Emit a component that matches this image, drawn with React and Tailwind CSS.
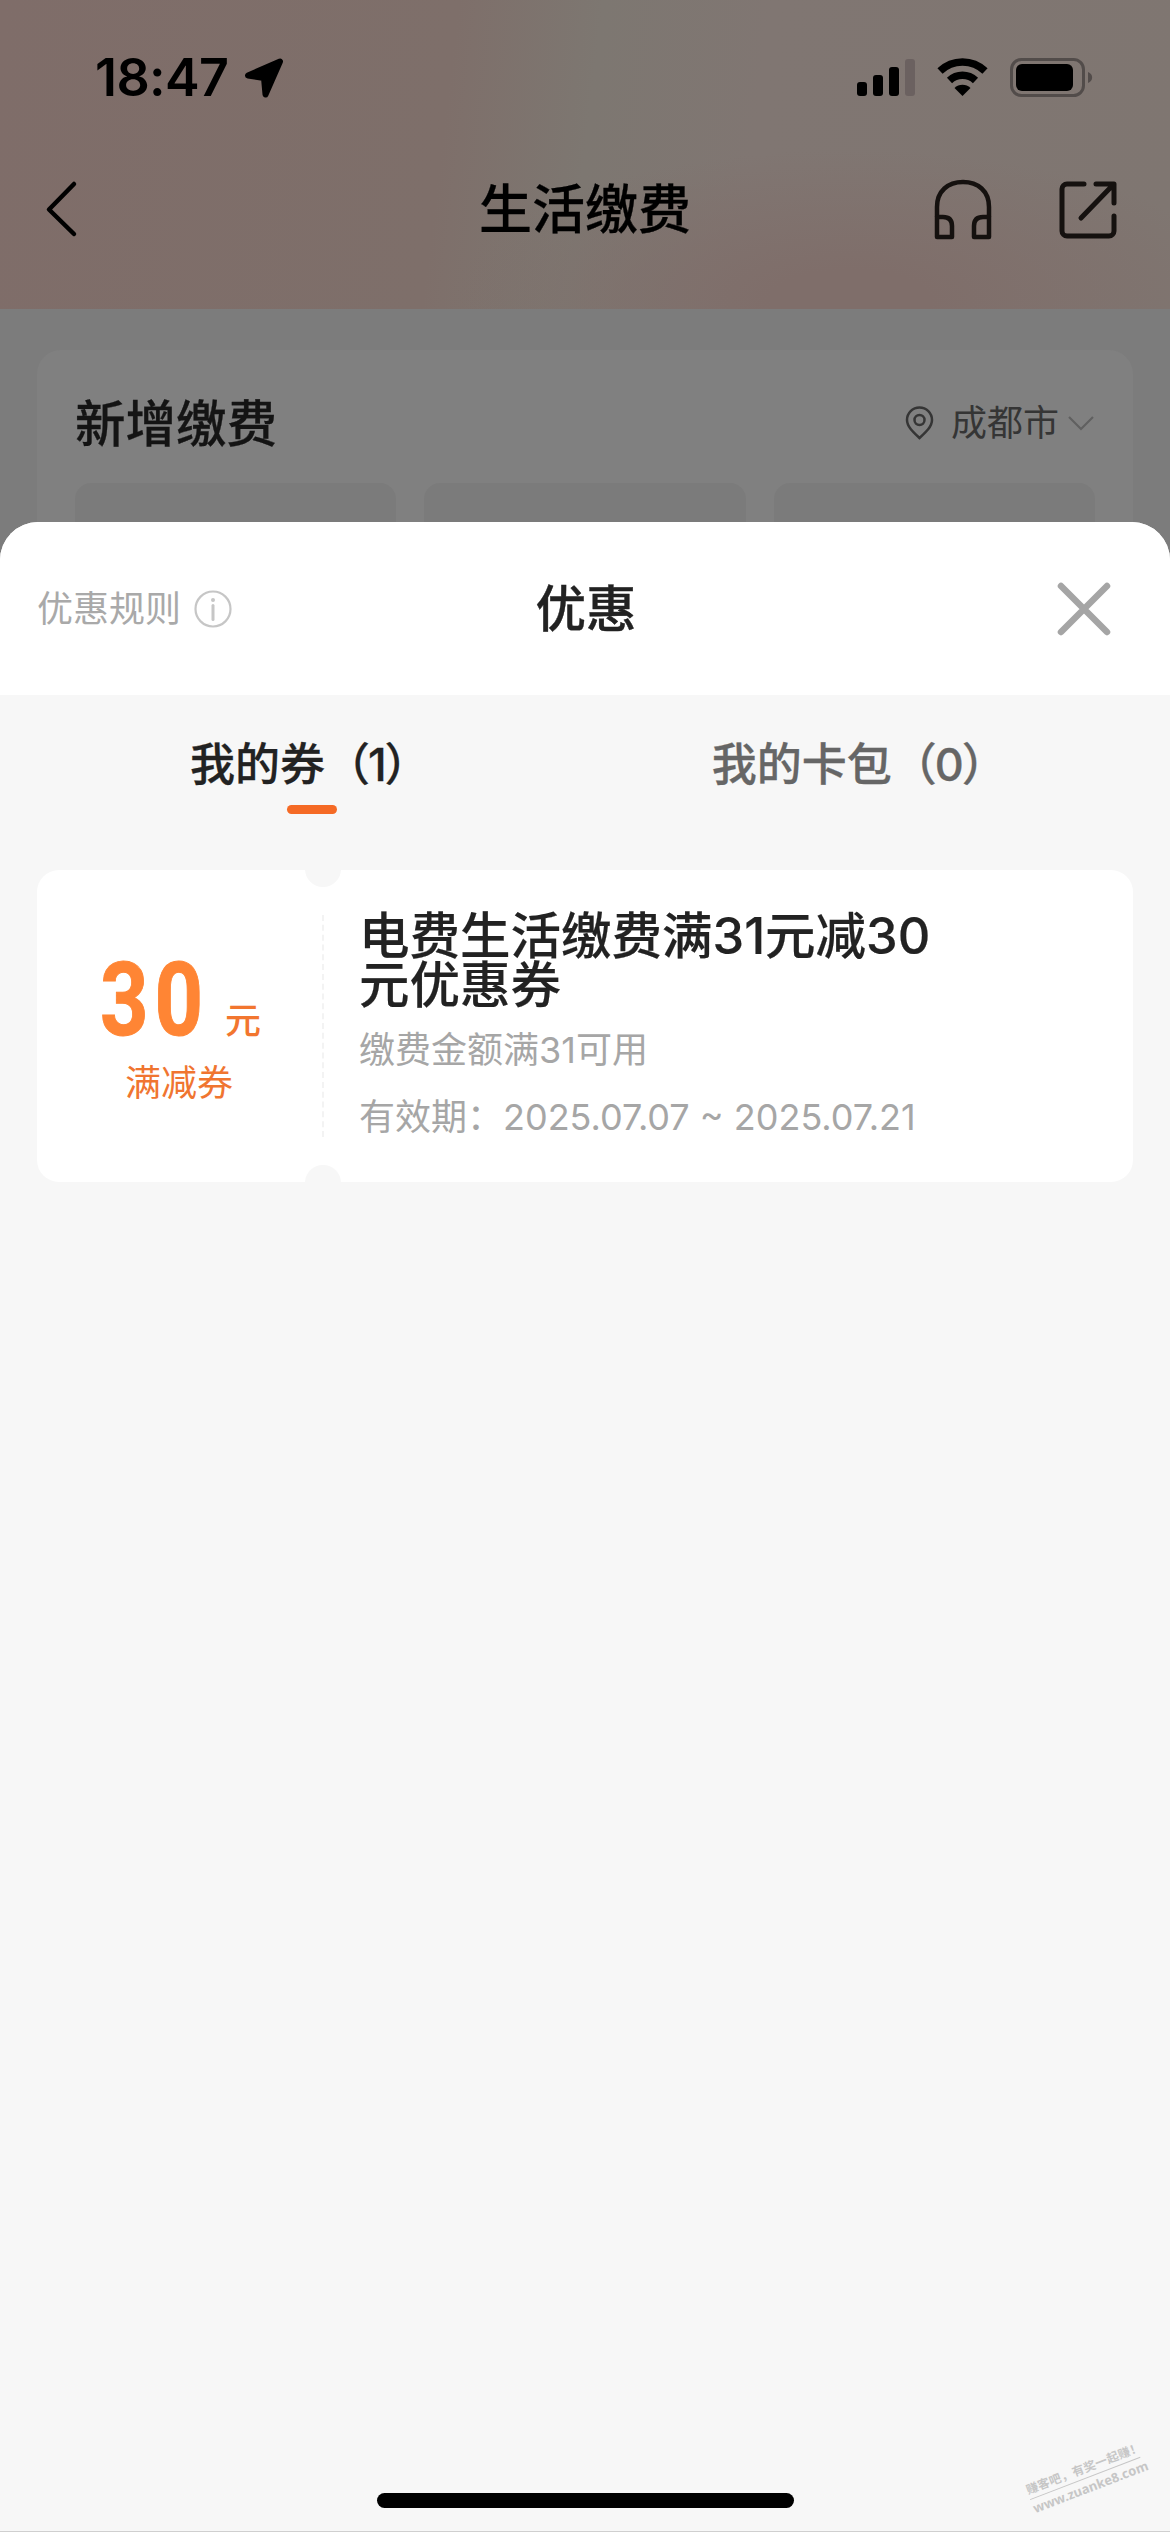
import React from "react";
import clsx from "clsx";

const TABS = [
  { key: "coupon", label: "我的券", count: 1, active: true },
  { key: "card", label: "我的卡包", count: 0, active: false },
];

const COUPONS = [
  {
    id: 1,
    amount: "30",
    unit: "元",
    type: "满减券",
    title: ["电费生活缴费满31元减30", "元优惠券"],
    condition: "缴费金额满31可用",
    validity: "有效期：2025.07.07 ~ 2025.07.21",
  },
];

function StatusBar() {
  return (
    <div className="flex h-[156px] items-start justify-between pt-[53px] pl-[95px] pr-[75px]">
      <div className="flex items-center gap-[16px]">
        <span className="text-[52px] leading-[50px] font-semibold tracking-[-0.6px] text-black">18:47</span>
        <svg width="41" height="41" viewBox="0 0 41 41" aria-hidden="true">
          <path
            d="M4 17.5 36 3.5 21.5 36.5 20 20z"
            fill="#000"
            stroke="#000"
            strokeWidth="6"
            strokeLinejoin="round"
          />
        </svg>
      </div>
      <svg width="238" height="50" viewBox="856 53 238 50" aria-hidden="true">
        <rect x="856" y="82" width="10" height="14" rx="3" />
        <rect x="872" y="75" width="10" height="21" rx="3" />
        <rect x="888" y="67" width="10" height="29" rx="3" />
        <rect x="904" y="59" width="10" height="37" rx="3" fill="#6b6160" />
        <path d="M961.5 96 953.5 88a11.5 11.5 0 0 1 16 0z" />
        <path d="M948.5 80.500a19 19 0 0 1 26 0" fill="none" stroke="#000" strokeWidth="7.500" />
        <path d="M939 71a32.500 32.500 0 0 1 45 0" fill="none" stroke="#000" strokeWidth="7.500" />
        <rect x="1010.500" y="59.500" width="72" height="36" rx="10" fill="none" stroke="#524c4a" strokeWidth="3" />
        <rect x="1015" y="64" width="57" height="27" rx="6" />
        <path d="M1087 72c5.500 2 5.500 9 0 11z" fill="#524c4a" />
      </svg>
    </div>
  );
}

function NavBar() {
  return (
    <div className="grid h-[107px] grid-cols-3 items-center pr-[44px] pl-[44px]">
      <svg width="36" height="60" viewBox="0 0 36 60" fill="none" aria-hidden="true">
        <path d="M30 4 5 29.500 30 54" stroke="#000" strokeWidth="4.500" strokeLinecap="round" strokeLinejoin="round" />
      </svg>
      <h1 className="pt-[2px] text-center text-[53px] leading-none font-medium text-black [-webkit-text-stroke:0.3px]">
        生活缴费
      </h1>
      <div className="flex items-center justify-end gap-[66px] pr-[9px]">
        <svg width="60" height="64" viewBox="0 0 60 64" fill="none" stroke="#15110f" strokeWidth="4.500" strokeLinejoin="round" aria-hidden="true">
          <path d="M4 39V29C4 13 15 4 30 4s26 9 26 25v10" />
          <path d="M4 39h6c6 0 9 3 9 9v11H4z" />
          <path d="M56 39h-6c-6 0-9 3-9 9v11h15z" />
        </svg>
        <svg width="58" height="60" viewBox="0 0 58 60" fill="none" stroke="#15110f" strokeWidth="5" strokeLinecap="round" strokeLinejoin="round" aria-hidden="true">
          <path d="M25 4H8a5 5 0 0 0-5 5v42a5 5 0 0 0 5 5h42a5 5 0 0 0 5-5V36" />
          <path d="M37 4h18v19M53 6 22 38" />
        </svg>
      </div>
    </div>
  );
}

function BillsCard() {
  return (
    <div className="mx-[37px] mt-[41px] rounded-t-[24px] bg-[#808080] px-[38px]">
      <div className="flex h-[133px] items-center justify-between pt-[12px]">
        <h2 className="pt-[4px] text-[50.5px] leading-none font-medium text-[#141414] [-webkit-text-stroke:0.3px]">
          新增缴费
        </h2>
        <div className="flex items-center text-[#353535]">
          <svg width="29" height="34" viewBox="0 0 29 34" fill="none" stroke="currentColor" strokeWidth="2.500" aria-hidden="true">
            <path d="M14.500 32C9 27 2 21 2 14a12.500 12.500 0 0 1 25 0c0 7-7 13-12.500 18z" />
            <circle cx="14.500" cy="14" r="5" />
          </svg>
          <span className="ml-[17px] text-[36px] leading-none">成都市</span>
          <svg className="ml-[8px]" width="28" height="18" viewBox="0 0 28 18" fill="none" stroke="#606060" strokeWidth="2.200" aria-hidden="true">
            <path d="M2 3l12 12L26 3" />
          </svg>
        </div>
      </div>
      <div className="grid grid-cols-3 gap-[28px]">
        <div className="h-[100px] rounded-[16px] bg-[#7b7b7b]" />
        <div className="h-[100px] rounded-[16px] bg-[#7b7b7b]" />
        <div className="h-[100px] rounded-[16px] bg-[#7b7b7b]" />
      </div>
    </div>
  );
}

function SheetHeader() {
  return (
    <div className="grid h-[173px] grid-cols-3 items-center rounded-t-[38px] bg-white pr-[57px] pl-[37px]">
      <div className="flex items-center gap-[13px] text-[#a9a9a9]">
        <span className="text-[36px] leading-none">优惠规则</span>
        <svg width="38" height="38" viewBox="0 0 38 38" fill="none" stroke="#c6c6c6" strokeWidth="2.200" aria-hidden="true">
          <circle cx="19" cy="19" r="17.500" />
          <path d="M19 15.500v14" strokeWidth="3" strokeLinecap="round" />
          <circle cx="19" cy="10" r="2" fill="#c6c6c6" stroke="none" />
        </svg>
      </div>
      <h2 className="pt-[1px] pl-[22px] text-center text-[50.5px] leading-none font-medium text-[#222] [-webkit-text-stroke:0.4px]">
        优惠
      </h2>
      <svg className="justify-self-end" width="58" height="58" viewBox="0 0 58 58" aria-hidden="true">
        <path d="M6 6l46 46M52 6 6 52" stroke="#a5a5a5" strokeWidth="6.500" strokeLinecap="round" />
      </svg>
    </div>
  );
}

function Tabs() {
  return (
    <div className="flex h-[175px] pr-[37px] pl-[38px]">
      {TABS.map((tab) => (
        <div key={tab.key} className="flex flex-1 flex-col items-center pt-[44px]">
          <span
            className={clsx(
              "text-[45px] leading-[52px] font-medium whitespace-nowrap [-webkit-text-stroke:0.3px]",
              tab.active ? "pr-[4px] text-[#222]" : "text-[#666]"
            )}
          >
            {tab.label}（<span className="-mx-[2px]">{tab.count}</span>）
          </span>
          {tab.active && <span className="mt-[14px] h-[9px] w-[50px] rounded-full bg-[#f56a25]" />}
        </div>
      ))}
    </div>
  );
}

function CouponCard({ coupon }) {
  return (
    <div className="relative mx-[37px] flex h-[312px] overflow-hidden rounded-[22px] bg-white">
      {/* ticket notches */}
      <span className="absolute -top-[19px] left-[268px] h-[36px] w-[36px] rounded-full bg-[#f7f7f7]" />
      <span className="absolute -bottom-[19px] left-[268px] h-[36px] w-[36px] rounded-full bg-[#f7f7f7]" />

      <div className="flex w-[285px] flex-col">
        <div className="mt-[85px] flex h-[90px] items-end pl-[63px]">
          <span className="w-[125px] shrink-0 origin-left scale-x-[0.83] font-['Roboto'] text-[102px] leading-[90px] font-bold tracking-[7px] text-[#ff8534] [-webkit-text-stroke:1px]">
            {coupon.amount}
          </span>
          <span className="text-[36px] leading-[48px] font-medium text-[#f2762f]">{coupon.unit}</span>
        </div>
        <span className="mt-[18px] pl-[88px] text-[36px] leading-[40px] text-[#f07530]">{coupon.type}</span>
      </div>

      <div className="my-[45px] border-l-2 border-dashed border-[#f3f3f3]" />

      <div className="pt-[41px] pl-[35px]">
        <h3 className="text-[50.5px] leading-[49px] font-medium whitespace-nowrap text-[#222] [-webkit-text-stroke:0.2px]">
          {coupon.title.map((line) => (
            <span key={line} className="block">
              {line}
            </span>
          ))}
        </h3>
        <p className="mt-[21px] text-[36px] leading-[40px] text-[#a6a6a6]">{coupon.condition}</p>
        <p className="mt-[27px] text-[36px] leading-[40px] whitespace-nowrap text-[#a6a6a6]">{coupon.validity}</p>
      </div>
    </div>
  );
}

function Watermark() {
  return (
    <div className="absolute right-[26px] bottom-[35px] w-[118px] -rotate-[21deg] text-[#c6c6c6]">
      <div className="text-[12px] leading-[19px] font-bold tracking-[0.3px] whitespace-nowrap">赚客吧，有奖一起赚！</div>
      <div className="border-t border-[#c6c6c6] text-center font-['Noto_Sans'] text-[13px] leading-[18px] font-bold">
        www.zuanke8.com
      </div>
    </div>
  );
}

export default function App() {
  return (
    <div className="relative flex h-[2532px] w-[1170px] flex-col overflow-hidden bg-[#7c7c7c] font-['Inter','Noto_Sans_CJK_SC',sans-serif]">
      <header className="h-[309px] bg-[radial-gradient(ellipse_400px_150px_at_850px_300px,#7f6e6a_20%,transparent),linear-gradient(97deg,#7f6d69_0%,#7e6f6a_38%,#7d7771_50%,#807672_64%,#7f7671_100%)]">
        <StatusBar />
        <NavBar />
      </header>
      <BillsCard />

      <section className="absolute inset-x-0 top-[522px] bottom-0 rounded-t-[38px] bg-[#f7f7f7]">
        <SheetHeader />
        <Tabs />
        {COUPONS.map((coupon) => (
          <CouponCard key={coupon.id} coupon={coupon} />
        ))}
        <div className="absolute bottom-[24px] left-[377px] h-[15px] w-[417px] rounded-full bg-black" />
        <Watermark />
        <div className="absolute inset-x-0 bottom-0 h-px bg-[#cfcfcf]" />
      </section>
    </div>
  );
}
